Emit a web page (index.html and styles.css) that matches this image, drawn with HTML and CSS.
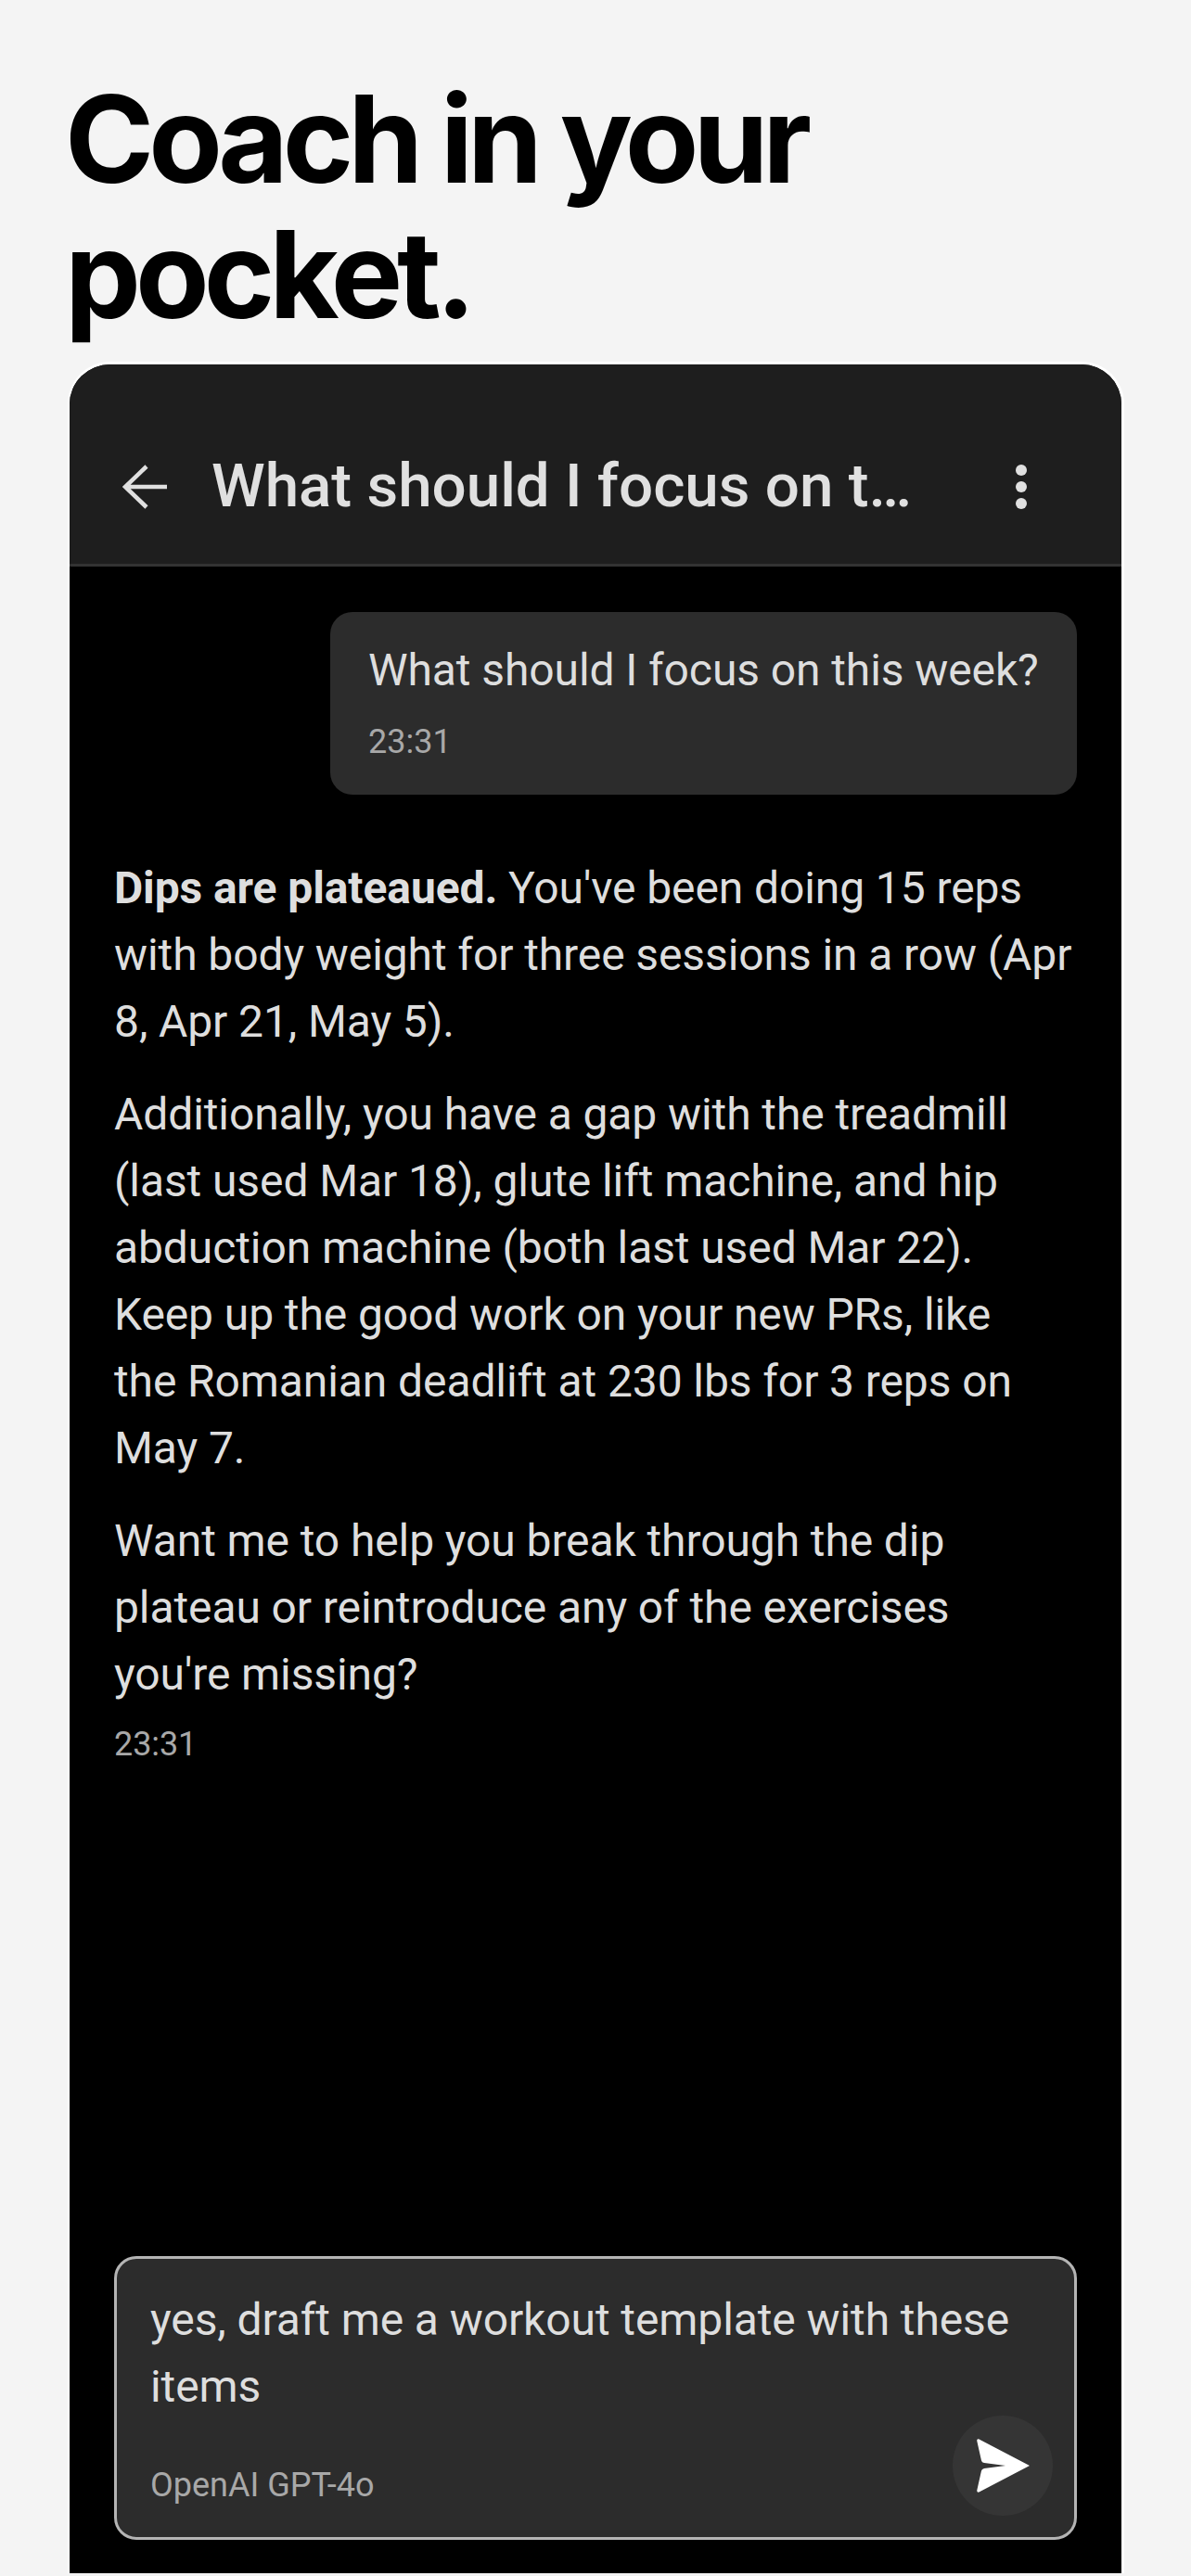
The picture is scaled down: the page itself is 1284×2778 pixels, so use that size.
FILE: index.html
```html
<!DOCTYPE html>
<html lang="en">
<head>
  <meta charset="UTF-8">
  <title>Coach in your pocket</title>
  <link rel="stylesheet" href="styles.css">
</head>
<body>
  <h1 class="headline">Coach in your<br>pocket.</h1>

  <div class="phone">
    <!-- Top bar -->
    <div class="topbar">
      <svg class="back-icon" viewBox="0 0 48 48" width="48" height="48">
        <path d="M48 24H3M26 2L3 24l23 22" fill="none" stroke="#e0e0e0" stroke-width="4.500"/>
      </svg>
      <div class="chat-title">What should I focus on t…</div>
      <div class="more-dots"><span></span><span></span><span></span></div>
    </div>

    <!-- Messages -->
    <div class="chat">
      <div class="user-msg">
        <div class="msg-text">What should I focus on this week?</div>
        <div class="msg-time">23:31</div>
      </div>

      <div class="reply">
        <p><strong>Dips are plateaued.</strong> You've been doing 15 reps<br>with body weight for three sessions in a row (Apr<br>8, Apr 21, May 5).</p>
        <p>Additionally, you have a gap with the treadmill<br>(last used Mar 18), glute lift machine, and hip<br>abduction machine (both last used Mar 22).<br>Keep up the good work on your new PRs, like<br>the Romanian deadlift at 230 lbs for 3 reps on<br>May 7.</p>
        <p>Want me to help you break through the dip<br>plateau or reintroduce any of the exercises<br>you're missing?</p>
        <div class="msg-time">23:31</div>
      </div>
    </div>

    <!-- Input box -->
    <div class="composer">
      <div class="composer-text">yes, draft me a workout template with these<br>items</div>
      <div class="composer-foot">
        <span class="model-name">OpenAI GPT-4o</span>
        <div class="send-btn">
          <svg viewBox="0 0 58 58" width="58" height="58">
            <path d="M3.500 .5L58 29 3.500 57.500C2 58 1 57 1.300 55.500L6 34.500Q6.500 32.500 9 32L32 29 9 26Q6.500 25.500 6 23.500L1.300 2.500C1 1 2 0 3.500 .5Z" fill="#fff"/>
          </svg>
        </div>
      </div>
    </div>
  </div>
</body>
</html>
```

FILE: styles.css
```css
html, body {
  margin: 0;
  padding: 0;
}
body {
  width: 1284px;
  height: 2778px;
  overflow: hidden;
  background-color: #f4f4f4;
  font-family: Roboto, sans-serif;
  box-sizing: border-box;
  padding: 0 72px 0 73px;
}
.headline {
  margin: 0 0 0 -3px;
  padding-top: 77px;
  height: 390px;
  box-sizing: border-box;
  font-family: Inter, sans-serif;
  font-size: 130px;
  font-weight: 700;
  line-height: 146px;
  letter-spacing: -6px;
  color: #000;
}
.phone {
  height: 2385px;
  box-sizing: border-box;
  border: 2px solid #fff;
  border-top-width: 3px;
  border-right-width: 3px;
  border-bottom: 0;
  border-radius: 46px 46px 0 0;
  background-color: #000;
  display: flex;
  flex-direction: column;
  overflow: hidden;
}
.topbar {
  height: 218px;
  box-sizing: border-box;
  padding: 93px 102px 0 57px;
  background-color: #1e1e1e;
  border-bottom: 3px solid #333;
  display: flex;
  align-items: flex-start;
}
.back-icon {
  margin-top: 15px;
  flex-shrink: 0;
}
.chat-title {
  margin-left: 48px;
  flex: 1;
  font-size: 65.5px;
  line-height: 76px;
  font-weight: 500;
  color: #e0e0e0;
}
.more-dots {
  margin-top: 15px;
  display: flex;
  flex-direction: column;
  gap: 6px;
}
.more-dots span {
  display: block;
  width: 12px;
  height: 12px;
  border-radius: 50%;
  background-color: #e0e0e0;
}
.chat {
  flex: 1;
  padding: 49px 48px 0 48px;
  display: flex;
  flex-direction: column;
}
.user-msg {
  align-self: flex-end;
  width: 805px;
  height: 197px;
  box-sizing: border-box;
  padding: 27px 30px 0 41px;
  background-color: #2c2c2c;
  border-radius: 24px;
}
.msg-text {
  font-size: 48px;
  line-height: 72px;
  letter-spacing: -0.1px;
  color: #dedede;
}
.msg-time {
  font-size: 36px;
  line-height: 48px;
  color: #a8a8a8;
}
.user-msg .msg-time {
  margin-top: 17px;
}
.reply {
  margin-top: 65px;
  font-size: 48px;
  line-height: 72px;
  letter-spacing: -0.1px;
  color: #dedede;
}
.reply p {
  margin: 0 0 28px 0;
}
.reply p:last-of-type {
  margin-bottom: 15px;
}
.composer {
  margin: 0 48px 36px 48px;
  height: 306px;
  box-sizing: border-box;
  padding: 30px 23px 0 36px;
  background-color: #2c2c2c;
  border: 3px solid #b4b4b4;
  border-radius: 24px;
}
.composer-text {
  font-size: 48px;
  line-height: 72px;
  letter-spacing: -0.1px;
  color: #dedede;
}
.composer-foot {
  display: flex;
  justify-content: space-between;
  align-items: flex-end;
  margin-top: -5px;
}
.model-name {
  font-size: 36px;
  line-height: 48px;
  color: #a8a8a8;
  padding-bottom: 9px;
}
.send-btn {
  width: 108px;
  height: 108px;
  border-radius: 50%;
  background-color: #353535;
  display: flex;
  align-items: center;
  justify-content: center;
}
```
